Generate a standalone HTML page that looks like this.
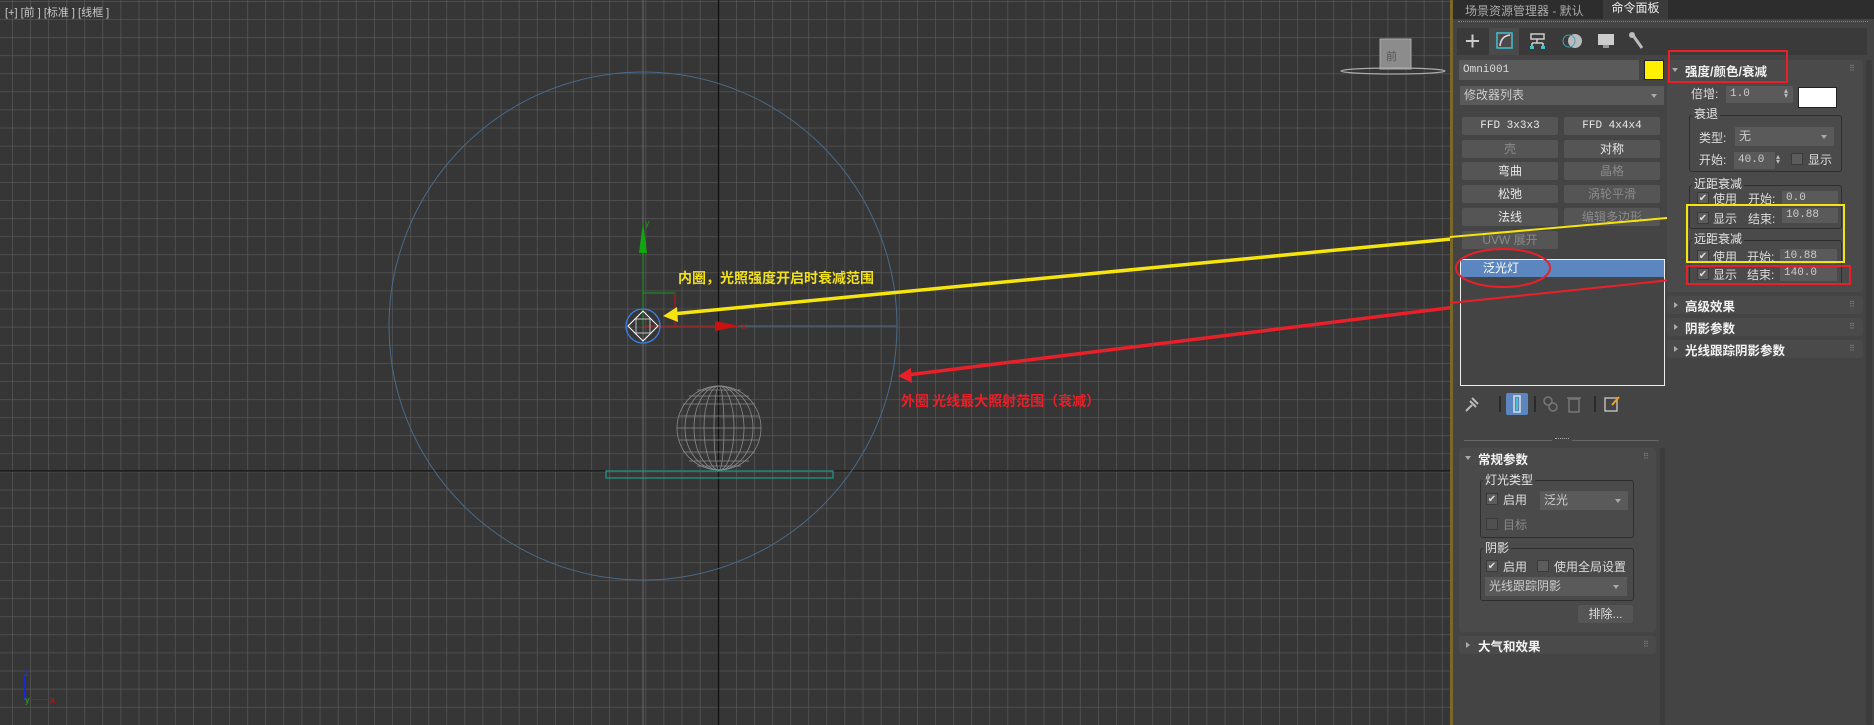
<!DOCTYPE html>
<html><head><meta charset="utf-8"><style>
*{margin:0;padding:0;box-sizing:border-box}
body{width:1874px;height:725px;overflow:hidden;background:#444;font-family:"Liberation Sans","Noto Sans CJK SC",sans-serif;font-size:12px;color:#ddd;position:relative}
.a{position:absolute}
.btn{position:absolute;background:#555;border-radius:2px;color:#e8e8e8;text-align:center;line-height:18px;height:18px;font-size:12px}
.dis{color:#8a8a8a}
.mono{font-family:"Liberation Mono","Noto Sans CJK SC",monospace;font-size:11px}
.fld{position:absolute;background:#5a5a5a;color:#ccc;height:17px;line-height:17px;padding-left:4px;border-radius:1px}
.grp{position:absolute;border:1px solid #2e2e2e;border-radius:3px}
.lbl{position:absolute;background:#4a4a4a;padding:0 2px;line-height:14px;color:#e6e6e6}
.cb{position:absolute;width:12px;height:12px;background:#5c5c5c;border:1px solid #3a3a3a;color:#ddd;font-size:10px;line-height:11px;text-align:center}
.roll{position:absolute;background:#4a4a4a;border-radius:3px}
.rt{position:absolute;font-weight:bold;color:#f2f2f2;font-size:12.5px}
.tri{position:absolute;width:0;height:0;border-left:4px solid #aaa;border-top:3px solid transparent;border-bottom:3px solid transparent}
.trid{position:absolute;width:0;height:0;border-top:4px solid #aaa;border-left:3px solid transparent;border-right:3px solid transparent}
.dots{position:absolute;color:#888;font-size:8px;letter-spacing:0}
.spin{position:absolute;font-size:8px;color:#bbb;line-height:5px}
</style></head><body>

<!-- Viewport -->
<svg class="a" style="left:0;top:0" width="1450" height="725" viewBox="0 0 1450 725">
<defs><pattern id="g" x="12" y="1" width="18.1" height="18.1" patternUnits="userSpaceOnUse">
<path d="M0 0V18.1M0 0H18.1" stroke="#5b5b5b" stroke-width="1.3" fill="none"/></pattern></defs>
<rect width="1450" height="725" fill="#363636"/>
<rect width="1450" height="725" fill="url(#g)"/>
<line x1="718.5" y1="0" x2="718.5" y2="725" stroke="#111" stroke-width="1.3"/>
<line x1="0" y1="471" x2="1450" y2="471" stroke="#111" stroke-width="1.3"/>
<line x1="643" y1="0" x2="643" y2="725" stroke="#6a6a6a" stroke-width="1"/>
<line x1="643" y1="326" x2="896" y2="326" stroke="#4a6a88" stroke-width="1"/>
<circle cx="643" cy="326" r="254" fill="none" stroke="#4a6a88" stroke-width="1"/>
<!-- sphere -->
<g stroke="#8a8a8a" stroke-width="0.8" fill="none">
<ellipse cx="719" cy="428" rx="42" ry="42"/>
<ellipse cx="719" cy="428" rx="34" ry="42"/><ellipse cx="719" cy="428" rx="25" ry="42"/><ellipse cx="719" cy="428" rx="15" ry="42"/><ellipse cx="719" cy="428" rx="5" ry="42"/>
<line x1="677" y1="428" x2="761" y2="428"/><line x1="679" y1="416" x2="759" y2="416"/><line x1="679" y1="440" x2="759" y2="440"/>
<line x1="683" y1="404" x2="755" y2="404"/><line x1="683" y1="452" x2="755" y2="452"/><line x1="689" y1="396" x2="749" y2="396"/><line x1="689" y1="461" x2="749" y2="461"/>
<line x1="697" y1="390" x2="741" y2="390"/><line x1="697" y1="466" x2="741" y2="466"/>
</g>
<rect x="606" y="471" width="227" height="7" fill="none" stroke="#1e9a88" stroke-width="1.2"/>
<!-- light gizmo -->
<line x1="643" y1="253" x2="643" y2="326" stroke="#1a9a1a" stroke-width="1"/>
<polygon points="643,222 639,253 647,253" fill="#11a611"/>
<text x="645" y="226" fill="#1a9a1a" font-size="9">y</text>
<polyline points="643,293 675,293 675,326" fill="none" stroke="#1a9a1a"/>
<line x1="675" y1="293" x2="675" y2="326" stroke="#cc1111"/>
<line x1="643" y1="326" x2="720" y2="326" stroke="#cc1111"/>
<polygon points="715,321 740,326 715,331" fill="#cc1111"/>
<text x="742" y="329" fill="#cc1111" font-size="9">x</text>
<circle cx="643" cy="326" r="17" fill="none" stroke="#3d7fe0" stroke-width="1.3"/>
<polygon points="643,311 658,326 643,341 628,326" fill="none" stroke="#fff" stroke-width="1"/>
<rect x="636" y="319" width="14" height="14" fill="none" stroke="#ddd" stroke-width="0.8"/>
<!-- arrows -->
<line x1="672" y1="314" x2="1690" y2="216" stroke="#f5e410" stroke-width="3.5"/>
<polygon points="663,316 677,307 678,322" fill="#f5e410"/>
<line x1="907" y1="375" x2="1690" y2="278" stroke="#e8202a" stroke-width="3.5"/>
<polygon points="898,376 911,368 912,383" fill="#e8202a"/>
<text x="678" y="283" fill="#f0e020" font-size="14" font-weight="bold" font-family="Noto Sans CJK SC, sans-serif">内圈，光照强度开启时衰减范围</text>
<text x="901" y="406" fill="#e8202a" font-size="14" font-weight="bold" font-family="Noto Sans CJK SC, sans-serif">外圈 光线最大照射范围（衰减）</text>
<text x="5" y="16" fill="#c8c8c8" font-size="11" font-family="Liberation Sans, Noto Sans CJK SC, sans-serif">[+]  [前 ]  [标准 ]  [线框 ]</text>
<!-- viewcube -->
<rect x="1380" y="39" width="31" height="30" fill="#8c8c8c" stroke="#aaa"/>
<text x="1386" y="60" fill="#555" font-size="11">前</text>
<ellipse cx="1393" cy="71" rx="52" ry="3" fill="none" stroke="#aaa" stroke-width="1.2"/>
<!-- tripod -->
<line x1="24.5" y1="675" x2="24.5" y2="700" stroke="#1a2acc" stroke-width="1.3"/>
<text x="24" y="676" fill="#2233dd" font-size="10">z</text>
<line x1="24" y1="699.5" x2="50" y2="699.5" stroke="#aa1111"/>
<text x="50" y="703" fill="#cc1111" font-size="10">x</text>
<text x="25" y="703" fill="#22aa22" font-size="9">y</text>
</svg>

<!-- Right panel -->
<div class="a" style="left:1450px;top:0;width:3px;height:725px;background:#7a6828"></div>
<div class="a" style="left:1453px;top:0;width:421px;height:19px;background:#2d2d2d"></div>
<div class="a" style="left:1465px;top:2px;color:#aaa;font-size:12px">场景资源管理器 - 默认</div>
<div class="a" style="left:1603px;top:0;width:65px;height:19px;background:#3b3b3b;color:#eee;text-align:center;line-height:17px">命令面板</div>
<div class="a" style="left:1458px;top:21px;width:410px;height:0;border-top:1px dotted #888"></div>
<div class="a" style="left:1457px;top:28px;width:410px;height:27px;background:#3a3a3a"></div>
<div class="a" style="left:1489px;top:28px;width:30px;height:27px;background:#4a4a4a"></div>
<svg class="a" style="left:1457px;top:28px" width="200" height="27">
<path d="M9 13H22M15.5 6.5V19.5" stroke="#ccc" stroke-width="2"/>
<rect x="40" y="5" width="15" height="15" fill="none" stroke="#44c0d0" stroke-width="1.5"/>
<path d="M43 18Q44 8 53 7" stroke="#ddd" stroke-width="1.5" fill="none"/>
<path d="M74 6h13v5h-13zM80 11v4M75 15h11M75 15v4M86 15v4" stroke="#ccc" stroke-width="1.5" fill="none"/>
<rect x="73" y="18" width="4" height="3" fill="#44c0d0"/><rect x="84" y="18" width="4" height="3" fill="#44c0d0"/>
<circle cx="118" cy="13" r="7" fill="#bbb"/><circle cx="112" cy="13" r="6" fill="none" stroke="#44a0b0"/>
<rect x="141" y="6" width="16" height="11" fill="#ccc"/><rect x="146" y="17" width="6" height="3" fill="#999"/>
<path d="M175 6l10 14" stroke="#bbb" stroke-width="3"/><circle cx="175" cy="7" r="3" fill="#bbb"/>
</svg>

<!-- left column -->
<div class="fld mono" style="left:1459px;top:60px;width:180px;height:20px;line-height:20px;color:#ddd">Omni001</div>
<div class="a" style="left:1644px;top:60px;width:20px;height:20px;background:#ffef00;border:1px solid #222"></div>
<div class="fld" style="left:1460px;top:86px;width:204px;height:19px;line-height:19px;font-size:12px;color:#ccc">修改器列表</div>
<div class="trid" style="left:1651px;top:94px"></div>
<div class="btn mono" style="left:1462px;top:117px;width:96px">FFD 3x3x3</div>
<div class="btn mono" style="left:1564px;top:117px;width:96px">FFD 4x4x4</div>
<div class="btn dis" style="left:1462px;top:140px;width:96px">壳</div>
<div class="btn" style="left:1564px;top:140px;width:96px">对称</div>
<div class="btn" style="left:1462px;top:162px;width:96px">弯曲</div>
<div class="btn dis" style="left:1564px;top:162px;width:96px">晶格</div>
<div class="btn" style="left:1462px;top:185px;width:96px">松弛</div>
<div class="btn dis" style="left:1564px;top:185px;width:96px">涡轮平滑</div>
<div class="btn" style="left:1462px;top:208px;width:96px">法线</div>
<div class="btn dis" style="left:1564px;top:208px;width:96px">编辑多边形</div>
<div class="btn dis" style="left:1462px;top:231px;width:96px">UVW 展开</div>
<div class="a" style="left:1460px;top:259px;width:205px;height:127px;border:1px solid #eee;background:#444"></div>
<div class="a" style="left:1461px;top:260px;width:203px;height:17px;background:#5b86c0;color:#fff;padding-left:22px;line-height:17px">泛光灯</div>
<!-- redraw arrows over panel -->
<svg class="a" style="left:1450px;top:0" width="424" height="400">
<line x1="0" y1="237" x2="240" y2="216" stroke="#f5e410" stroke-width="2"/>
<line x1="0" y1="303" x2="240" y2="278" stroke="#e8202a" stroke-width="2"/>
<ellipse cx="53" cy="268" rx="47" ry="19" fill="none" stroke="#e8202a" stroke-width="2"/>
</svg>
<svg class="a" style="left:1460px;top:393px" width="200" height="22">
<path d="M6 18l6-6M10 8l6 6M12 5l6 6" stroke="#bbb" stroke-width="2"/>
<line x1="40" y1="3" x2="40" y2="19" stroke="#111"/>
<rect x="46" y="0" width="22" height="22" rx="2" fill="#5b86c0"/>
<rect x="54" y="3" width="6" height="16" fill="none" stroke="#ddd" stroke-width="1.5"/><line x1="57" y1="5" x2="57" y2="17" stroke="#44c0d0" stroke-width="2"/>
<line x1="75" y1="3" x2="75" y2="19" stroke="#111"/>
<circle cx="88" cy="8" r="4" fill="none" stroke="#777" stroke-width="1.5"/><circle cx="93" cy="14" r="4" fill="none" stroke="#777" stroke-width="1.5"/>
<rect x="109" y="6" width="10" height="13" fill="none" stroke="#777" stroke-width="1.5"/><line x1="107" y1="5" x2="121" y2="5" stroke="#777" stroke-width="1.5"/>
<line x1="135" y1="3" x2="135" y2="19" stroke="#111"/>
<rect x="145" y="5" width="12" height="13" fill="none" stroke="#ccc" stroke-width="1.3"/><path d="M152 12l7-8" stroke="#f0a020" stroke-width="2"/>
</svg>
<div class="a" style="left:1464px;top:440px;width:88px;border-top:1px solid #666"></div>
<div class="a" style="left:1572px;top:440px;width:87px;border-top:1px solid #666"></div>
<div class="a" style="left:1555px;top:438px;width:14px;border-top:1px dotted #aaa"></div>

<div class="roll" style="left:1459px;top:448px;width:197px;height:184px"></div>
<div class="trid" style="left:1465px;top:456px"></div>
<div class="rt" style="left:1478px;top:449px">常规参数</div>
<div class="dots" style="left:1643px;top:452px">⠿</div>
<div class="grp" style="left:1480px;top:480px;width:154px;height:58px"></div>
<div class="lbl" style="left:1483px;top:473px">灯光类型</div>
<div class="cb" style="left:1486px;top:493px">✔</div><div class="a" style="left:1503px;top:491px">启用</div>
<div class="fld" style="left:1540px;top:491px;width:88px;height:19px;line-height:19px">泛光</div><div class="trid" style="left:1615px;top:499px"></div>
<div class="cb" style="left:1486px;top:518px;background:#505050"></div><div class="a dis" style="left:1503px;top:516px">目标</div>
<div class="grp" style="left:1480px;top:548px;width:154px;height:53px"></div>
<div class="lbl" style="left:1483px;top:541px">阴影</div>
<div class="cb" style="left:1486px;top:560px">✔</div><div class="a" style="left:1503px;top:558px">启用</div>
<div class="cb" style="left:1537px;top:560px"></div><div class="a" style="left:1554px;top:558px">使用全局设置</div>
<div class="fld" style="left:1485px;top:577px;width:142px;height:19px;line-height:19px">光线跟踪阴影</div><div class="trid" style="left:1613px;top:585px"></div>
<div class="btn" style="left:1578px;top:605px;width:55px;color:#ddd">排除...</div>
<div class="roll" style="left:1459px;top:636px;width:197px;height:18px"></div>
<div class="tri" style="left:1466px;top:642px"></div>
<div class="rt" style="left:1478px;top:636px">大气和效果</div>
<div class="dots" style="left:1643px;top:640px">⠿</div>
<div class="a" style="left:1660px;top:448px;width:5px;height:277px;background:#3c3c3c;border-radius:2px"></div>

<!-- right column -->
<div class="roll" style="left:1667px;top:60px;width:196px;height:232px"></div>
<div class="trid" style="left:1672px;top:68px"></div>
<div class="rt" style="left:1685px;top:61px">强度/颜色/衰减</div>
<div class="dots" style="left:1849px;top:64px">⠿</div>
<div class="a" style="left:1691px;top:85px">倍增:</div>
<div class="fld mono" style="left:1726px;top:86px;width:67px">1.0</div><div class="spin" style="left:1784px;top:88px">▴<br>▾</div>
<div class="a" style="left:1798px;top:87px;width:39px;height:21px;background:#fff;border:1px solid #222"></div>
<div class="grp" style="left:1689px;top:115px;width:153px;height:57px"></div>
<div class="lbl" style="left:1692px;top:107px">衰退</div>
<div class="a" style="left:1699px;top:129px">类型:</div>
<div class="fld" style="left:1735px;top:127px;width:99px;height:19px;line-height:19px">无</div><div class="trid" style="left:1821px;top:135px"></div>
<div class="a" style="left:1699px;top:151px">开始:</div>
<div class="fld mono" style="left:1734px;top:152px;width:41px">40.0</div><div class="spin" style="left:1776px;top:154px">▴<br>▾</div>
<div class="cb" style="left:1791px;top:153px"></div><div class="a" style="left:1808px;top:151px">显示</div>
<div class="grp" style="left:1689px;top:185px;width:153px;height:44px"></div>
<div class="lbl" style="left:1692px;top:177px">近距衰减</div>
<div class="cb" style="left:1697px;top:192px">✔</div><div class="a" style="left:1713px;top:190px">使用</div><div class="a" style="left:1748px;top:190px">开始:</div>
<div class="fld mono" style="left:1782px;top:191px;width:56px;height:15px;line-height:15px">0.0</div>
<div class="cb" style="left:1697px;top:212px">✔</div><div class="a" style="left:1713px;top:210px">显示</div><div class="a" style="left:1748px;top:210px">结束:</div>
<div class="fld mono" style="left:1782px;top:208px;width:56px;height:15px;line-height:15px">10.88</div>
<div class="grp" style="left:1689px;top:240px;width:153px;height:45px"></div>
<div class="lbl" style="left:1692px;top:232px">远距衰减</div>
<div class="cb" style="left:1697px;top:250px">✔</div><div class="a" style="left:1713px;top:248px">使用</div><div class="a" style="left:1747px;top:248px">开始:</div>
<div class="fld mono" style="left:1780px;top:249px;width:57px;height:15px;line-height:15px">10.88</div>
<div class="cb" style="left:1697px;top:268px">✔</div><div class="a" style="left:1713px;top:266px">显示</div><div class="a" style="left:1747px;top:266px">结束:</div>
<div class="fld mono" style="left:1780px;top:266px;width:57px;height:15px;line-height:15px">140.0</div>
<div class="a" style="left:1668px;top:50px;width:120px;height:33px;border:2px solid #e8202a"></div>
<div class="a" style="left:1686px;top:204px;width:159px;height:59px;border:2px solid #f5e410"></div>
<div class="a" style="left:1686px;top:265px;width:165px;height:20px;border:2px solid #e8202a"></div>
<div class="roll" style="left:1667px;top:296px;width:196px;height:18px"></div>
<div class="tri" style="left:1674px;top:302px"></div><div class="rt" style="left:1685px;top:296px">高级效果</div><div class="dots" style="left:1849px;top:300px">⠿</div>
<div class="roll" style="left:1667px;top:318px;width:196px;height:18px"></div>
<div class="tri" style="left:1674px;top:324px"></div><div class="rt" style="left:1685px;top:318px">阴影参数</div><div class="dots" style="left:1849px;top:322px">⠿</div>
<div class="roll" style="left:1667px;top:340px;width:196px;height:18px"></div>
<div class="tri" style="left:1674px;top:346px"></div><div class="rt" style="left:1685px;top:340px">光线跟踪阴影参数</div><div class="dots" style="left:1849px;top:344px">⠿</div>
<div class="a" style="left:1866px;top:60px;width:6px;height:665px;background:#3c3c3c;border-radius:2px"></div>
</body></html>
